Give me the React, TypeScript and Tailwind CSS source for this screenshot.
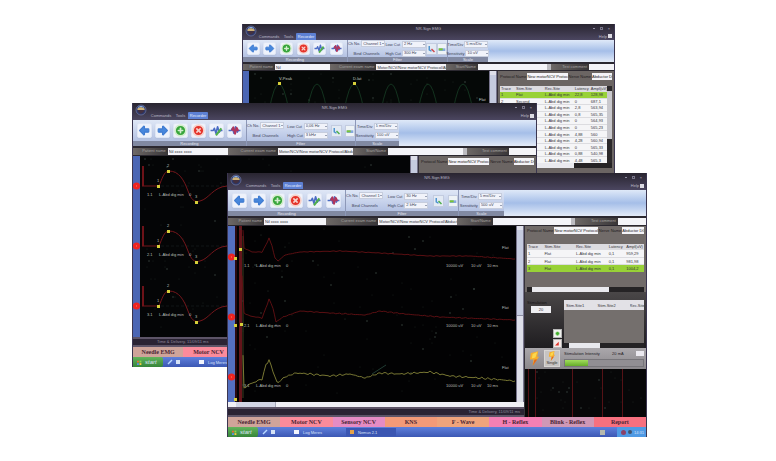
import React, { useId } from 'react';
import { clsx } from 'clsx';
import { ArrowBigLeft, ArrowBigRight, CirclePlus, CircleX } from 'lucide-react';

type Point = [number, number];

interface Row {
  cells: string[];
  active?: boolean;
}

interface DeviceWindowProps {
  variant: 'back' | 'middle' | 'front';
  lowCut: string;
  highCut: string;
  sensitivity: string;
  patient: string;
  status?: string;
  chart: React.ReactNode;
  panel?: React.ReactNode;
}

const footerTabs = [
  { name: 'Needle EMG', color: 'bg-[#cfa49a]' },
  { name: 'Motor NCV', color: 'bg-[#fb8b9b]' },
  { name: 'Sensory NCV', color: 'bg-[#e58cc4]' },
  { name: 'KNS', color: 'bg-[#f39a78]' },
  { name: 'F - Wave', color: 'bg-[#efa47c]' },
  { name: 'H - Reflex', color: 'bg-[#f480b4]' },
  { name: 'Blink - Reflex', color: 'bg-[#cf98b6]' },
  { name: 'Report', color: 'bg-[#f7707f]' },
];

const columns = ['Trace', 'Stim.Site', 'Rec.Site', 'Latency', 'Ampl(uV)'];

const frontRows: Row[] = [
  { cells: ['1', 'Flat', 'L-Abd dig min', '0,1', '959,29'] },
  { cells: ['2', 'Flat', 'L-Abd dig min', '0,1', '981,98'] },
  { cells: ['3', 'Flat', 'L-Abd dig min', '0,1', '1004,2'], active: true },
];

const backRows: Row[] = [
  { cells: ['1', 'Flat', 'L-Abd dig min', '22,8', '128,98'], active: true },
  { cells: ['2', 'Second', 'L-Abd dig min', '0', '687,1'] },
  { cells: ['3', '', 'L-Abd dig min', '2,8', '563,94'] },
  { cells: ['4', '', 'L-Abd dig min', '0,8', '565,35'] },
  { cells: ['5', '', 'L-Abd dig min', '0', '564,93'] },
  { cells: ['6', '', 'L-Abd dig min', '0', '565,23'] },
  { cells: ['7', '', 'L-Abd dig min', '4,88', '560'] },
  { cells: ['8', '', 'L-Abd dig min', '4,28', '560,94'] },
  { cells: ['9', '', 'L-Abd dig min', '0', '565,33'] },
  { cells: ['10', '', 'L-Abd dig min', '0,88', '540,98'] },
  { cells: ['11', '', 'L-Abd dig min', '4,48', '565,3'] },
];

const frontTraces: { y: number; color: string; noise: number; points: Point[] }[] = [
  {
    y: 31,
    color: '#641114',
    noise: 0.4,
    points: [[15, 4], [16, 22], [24, 26], [34, 26], [38, 19], [41, 12], [44, 20], [47, 32], [50, 35], [57, 29], [72, 26], [112, 25], [152, 27], [202, 30], [242, 30], [287, 33]],
  },
  {
    y: 91,
    color: '#641114',
    noise: 0.5,
    points: [[14, 50], [16, 87], [22, 90], [34, 92], [38, 82], [41, 73], [45, 82], [48, 96], [55, 91], [72, 85], [102, 87], [137, 89], [152, 85], [177, 88], [212, 91], [287, 94]],
  },
  {
    y: 151,
    color: '#858338',
    noise: 1.1,
    points: [[15, 129], [16, 162], [22, 158], [34, 153], [38, 139], [41, 134], [45, 145], [49, 157], [57, 151], [68, 147], [82, 148], [102, 150], [122, 148], [137, 152], [152, 147], [172, 148], [202, 146], [222, 150], [252, 152], [287, 155]],
  },
];

// breaks the line into 2px steps and adds a small ripple
function tracePath(points: Point[], noise: number) {
  const out: string[] = [];
  for (let i = 0; i < points.length - 1; i++) {
    const [x0, y0] = points[i];
    const [x1, y1] = points[i + 1];
    const steps = Math.max(1, Math.round((x1 - x0) / 2));
    for (let s = 0; s < steps; s++) {
      const x = x0 + ((x1 - x0) * s) / steps;
      const y = y0 + ((y1 - y0) * s) / steps + Math.sin(x * 1.7) * Math.sin(x * 0.6) * noise;
      out.push(`${x.toFixed(1)},${y.toFixed(1)}`);
    }
  }
  out.push(points[points.length - 1].join(','));
  return out.join(' ');
}

function Specks({ width, height, count }: { width: number; height: number; count: number }) {
  return (
    <g fill="#36403c">
      {Array.from({ length: count }, (_, i) => (
        <circle key={i} cx={12 + ((i * 73 + i * i * 11) % (width - 14))} cy={3 + ((i * 41 + i * i * 7) % (height - 6))} r={i % 4 ? 0.4 : 0.8} />
      ))}
    </g>
  );
}

function Marker({ x, y }: { x: number; y: number }) {
  return <rect x={x - 1} y={y - 1} width="3" height="3" fill="#d6cf3a" />;
}

function Dot({ y }: { y: number }) {
  return (
    <g>
      <circle cx="3.5" cy={y} r="3.6" fill="#ee2420" />
      <rect x="3" y={y - 1} width="1" height="2" fill="#f8513c" />
    </g>
  );
}

function FrontChart() {
  return (
    <svg className="h-full w-full font-['Liberation_Sans'] text-[4px]" role="img" aria-label="Traces">
      <rect width="100%" height="100%" fill="#020203" />
      <rect width="7" height="100%" fill="#5470c0" />
      <rect x="7" width="2" height="100%" fill="#2b0a10" />
      <rect x="11" width="3" height="100%" fill="#64141a" />
      <path d="M15 10V172" stroke="#3c3d22" />
      <Specks width={287} height={174} count={110} />
      {frontTraces.map((t, i) => (
        <g key={t.y}>
          <polyline points={tracePath(t.points, t.noise)} fill="none" stroke={t.color} strokeWidth="0.9" />
          <Dot y={t.y} />
          <g fill="#b9beb9">
            <text x="16" y={t.y + 10}>{i + 1}.1</text>
            <text x="28" y={t.y + 10}>L-Abd dig min</text>
            <text x="58" y={t.y + 10}>0</text>
            <text x="218" y={t.y + 10}>10000 uV</text>
            <text x="243" y={t.y + 10}>10 uV</text>
            <text x="259" y={t.y + 10}>10 ms</text>
            <text x="274" y={t.y - 8}>Flat</text>
          </g>
        </g>
      ))}
      <path d="M144 148l14-9" stroke="#2d5448" strokeWidth="0.7" />
      <Marker x={12} y={23} />
      <Marker x={7} y={32} />
      <Marker x={7} y={99} />
      <Marker x={13} y={98} />
      <Marker x={7} y={173} />
    </svg>
  );
}

function MiddleChart() {
  return (
    <svg className="h-full w-full font-['Liberation_Sans'] text-[4px]" role="img" aria-label="Traces">
      <rect width="100%" height="100%" fill="#040506" />
      <rect width="7" height="100%" fill="#4b66b4" />
      <Specks width={276} height={180} count={130} />
      {[30, 90, 150].map((y, i) => (
        <g key={y}>
          <path d={`M28 ${y}H276`} stroke="#1d2322" strokeDasharray="3 2" strokeWidth="0.6" />
          <path d={`M10 ${y - 20}V${y}`} stroke="#6d1218" strokeWidth="2" />
          <path
            d={`M9 ${y}H26C29 ${y - 7} 31 ${y - 15} 36 ${y - 15}C46 ${y - 15} 51 ${y - 6} 55 ${y + 5}C58 ${y + 13} 61 ${y + 17} 67 ${y + 15}C76 ${y + 13} 80 ${y + 1} 94 ${y}`}
            fill="none"
            stroke="#74161b"
          />
          <Dot y={y} />
          <Marker x={25} y={y} />
          <Marker x={35} y={y - 15} />
          <Marker x={63} y={y + 16} />
          <g fill="#b9beb9">
            <text x="14" y={y + 10}>{i + 1}.1</text>
            <text x="26" y={y + 10}>L-Abd dig min</text>
            <text x="56" y={y + 10}>0</text>
            <text x="24" y={y - 4}>1</text>
            <text x="34" y={y - 19}>2</text>
            <text x="62" y={y + 12}>3</text>
          </g>
        </g>
      ))}
    </svg>
  );
}

function BackChart() {
  return (
    <svg className="h-full w-full font-['Liberation_Sans'] text-[4px]" role="img" aria-label="Traces">
      <rect width="100%" height="100%" fill="#050807" />
      <rect width="6" height="100%" fill="#4b66b4" />
      <Specks width={248} height={100} count={90} />
      {[36, 74, 111, 148, 185, 220].map((x) => (
        <path key={x} d={`M${x - 10} 40Q${x - 5} 13 ${x} 13T${x + 10} 40`} fill="none" stroke="#173d25" strokeWidth="0.8" />
      ))}
      <Marker x={36} y={12} />
      <Marker x={111} y={12} />
      <g fill="#c2c8c2">
        <text x="36" y="9">V-Peak</text>
        <text x="110" y="9">D-lat</text>
        <text x="236" y="30">Flat</text>
      </g>
    </svg>
  );
}

function RibbonSelect({ label, value }: { label: string; value: string }) {
  const id = useId();
  return (
    <div className="flex items-center justify-between gap-px">
      <label htmlFor={id} className="whitespace-nowrap">{label}</label>
      <div className="relative w-6 shrink-0">
        <select id={id} defaultValue={value} className="block h-[7px] w-full appearance-none border border-[#c6cddd] bg-[#f1f3fa] pl-px leading-none">
          <option>{value}</option>
        </select>
        <span className="pointer-events-none absolute right-px top-[3px] h-px w-[2px] bg-[#9aa2b6]" />
      </div>
    </div>
  );
}

function BarField({ label, value = '', dropdown }: { label: string; value?: string; dropdown?: boolean }) {
  const id = useId();
  return (
    <>
      <label htmlFor={id} className="truncate bg-linear-to-r from-[#6d6866] to-[#393638] pr-[2px] text-right text-[#a9a5a4]">
        {label}
      </label>
      {dropdown ? (
        <select id={id} className="h-full w-full min-w-0 appearance-none border-r-4 border-[#bdbcc1] bg-[#f4f4f8]">
          <option>{value}</option>
        </select>
      ) : (
        <input id={id} defaultValue={value} className="h-full w-full min-w-0 bg-[#f4f4f8] pl-px text-[#33343c]" />
      )}
    </>
  );
}

function WaveIcon({ accent }: { accent: 'green' | 'red' }) {
  return (
    <svg viewBox="0 0 24 24" className="h-full w-full" fill="none" strokeLinejoin="round">
      <path d="M1 12h5l2-4 3 9 3-12 3 10 2-3h4" stroke="#4a6cc4" strokeWidth="3" />
      {accent === 'green' ? (
        <path d="M11 21l10-13" stroke="#4fae4c" strokeWidth="4" />
      ) : (
        <path d="M7 12l3-6 3 12 3-11 3 6" stroke="#b0355c" strokeWidth="3.5" />
      )}
    </svg>
  );
}

function Orb() {
  return (
    <svg viewBox="0 0 24 24" className="h-3 w-[14px]">
      <circle cx="12" cy="12" r="10" fill="#2c3768" stroke="#6d749c" strokeWidth="1.5" />
      <path d="M4 10c4-5 11-5 16 0l-3 4H7z" fill="#cdb27a" />
      <path d="M6 12h12v3l-5 4h-3l-4-4z" fill="#423040" />
      <path d="M6 7c4-3 8-3 12 0" stroke="#8db4e8" strokeWidth="2" fill="none" />
    </svg>
  );
}

const tools = [
  { name: 'Previous', icon: <ArrowBigLeft className="h-full w-full" fill="#4787dc" stroke="#3f7bd0" /> },
  { name: 'Next', icon: <ArrowBigRight className="h-full w-full" fill="#4787dc" stroke="#3f7bd0" /> },
  { name: 'Add', icon: <CirclePlus className="h-full w-full" fill="#37a53b" stroke="#d3edcd" strokeWidth={3} /> },
  { name: 'Delete', icon: <CircleX className="h-full w-full" fill="#e5342b" stroke="#f6d0ca" strokeWidth={3} /> },
  { name: 'Edit wave', icon: <WaveIcon accent="green" /> },
  { name: 'Compare wave', icon: <WaveIcon accent="red" /> },
];

function Ribbon({ compact, lowCut, highCut, sensitivity }: { compact: boolean; lowCut: string; highCut: string; sensitivity: string }) {
  const body = clsx('flex items-center bg-linear-to-b from-[#dfe7f6] to-[#b4c2e3]', compact ? 'h-[17px]' : 'h-[21px]');
  const caption = 'h-[5px] bg-[#8189a2] text-center leading-[5px] text-[#e6e8f0]';
  return (
    <div className="flex bg-linear-to-b from-[#dfe9f8] via-[#a5bee8] to-[#e3ebf8] text-[#3d4358]">
      <div className="w-[28%]">
        <div className={clsx(body, 'grid grid-cols-6 justify-items-center px-[2px]')}>
          {tools.map((tool) => (
            <button key={tool.name} aria-label={tool.name} className={clsx('rounded-xs border border-[#dfe6f5] bg-[#eef2fb] shadow-xs', compact ? 'size-[13px]' : 'size-[15px]')}>
              {tool.icon}
            </button>
          ))}
        </div>
        <div className={caption}>Recording</div>
      </div>
      <div className="w-[27%] border-l border-[#8d98b8]">
        <div className={clsx(body, 'justify-between')}>
          <div className="flex flex-col gap-[3px]">
            <RibbonSelect label="Ch No." value="Channel 1" />
            <span className="h-[7px] text-center leading-[7px]">Bind Channels</span>
          </div>
          <div className="flex flex-col gap-[2px]">
            <RibbonSelect label="Low Cut" value={lowCut} />
            <RibbonSelect label="High Cut" value={highCut} />
          </div>
          <button aria-label="Notch filter" className="h-3 w-[11px] border border-[#c3cce0] bg-[#e3eaf4]">
            <svg viewBox="0 0 12 12" className="h-full w-full" fill="none" strokeWidth="2">
              <path d="M3 2v5l3 2" stroke="#4e93ce" />
              <path d="M6 6l4 4" stroke={compact ? '#cf4a4f' : '#4fae4c'} />
            </svg>
          </button>
          <button aria-label="Apply filter" className="h-3 w-[10px] border border-[#c3cce0] bg-[#eef3f6]">
            <svg viewBox="0 0 12 12" className="h-full w-full">
              <path d="M1 5h10v4H1z" fill="#86aadd" />
              <path d="M1 5h6v3H1z" fill="#79c535" />
            </svg>
          </button>
        </div>
        <div className={caption}>Filter</div>
      </div>
      <div className="w-[11%] border-l border-[#8d98b8]">
        <div className={clsx(body, 'flex-col justify-center gap-[2px]')}>
          <RibbonSelect label="Time/Div" value="5 ms/Div" />
          <RibbonSelect label="Sensitivity" value={sensitivity} />
        </div>
        <div className={caption}>Scale</div>
      </div>
    </div>
  );
}

function ResultTable({ rows, className }: { rows: Row[]; className?: string }) {
  return (
    <table className={clsx('w-full table-fixed bg-[#f5f5f7] text-left text-[#34343a]', className)}>
      <thead>
        <tr className="bg-[#dcdbe0]">
          {columns.map((name, i) => (
            <th
              key={name}
              className={clsx('overflow-hidden whitespace-nowrap p-0 pl-px font-normal', i === 0 && 'w-[14%]', i === 1 && 'w-[27%]', i === 2 && 'w-[28%]', i === 3 && 'w-[15%]')}
            >
              {name}
            </th>
          ))}
        </tr>
      </thead>
      <tbody>
        {rows.map((row) => (
          <tr key={row.cells[0]} className={clsx('border-t border-[#dcdce0]', row.active && 'bg-[#98d137]')}>
            {row.cells.map((cell, i) => (
              <td key={i} className="overflow-hidden whitespace-nowrap p-0 pl-px">{cell}</td>
            ))}
          </tr>
        ))}
      </tbody>
    </table>
  );
}

function ProtocolRow() {
  const protocolId = useId();
  const nerveId = useId();
  return (
    <div className="flex h-[7px] items-center gap-px text-[#1f1c1e]">
      <label htmlFor={protocolId} className="shrink-0 whitespace-nowrap">Protocol Name</label>
      <input id={protocolId} defaultValue="New motorNCV Protocol" className="h-full w-0 grow-2 bg-[#f4f4f8]" />
      <label htmlFor={nerveId} className="shrink-0 whitespace-nowrap">Nerve Name</label>
      <input id={nerveId} defaultValue="Abductor DG" className="h-full w-0 grow bg-[#f4f4f8]" />
    </div>
  );
}

function Scrollbar({ thumb }: { thumb: string }) {
  return (
    <div className="flex h-[5px] items-center bg-[#252325] px-[5px]">
      <div className={clsx('h-full bg-[#e9e9ee]', thumb)} />
    </div>
  );
}

function Bolt() {
  return (
    <svg viewBox="0 0 12 16" className="h-full w-full">
      <path d="M2 2l8-2-1 6h2L4 16l1-7H1z" fill="#f7ae2c" />
      <path d="M4 3l5-2-2 6-4 1z" fill="#fbd84d" />
      <path d="M6 9h3l-5 7z" fill="#e0671f" />
    </svg>
  );
}

function FrontPanel() {
  return (
    <div className="flex h-full flex-col bg-[#242224]">
      <div className="bg-[#716b69] px-[2px] pt-px">
        <ProtocolRow />
        <div className="mt-[10px] h-[43px]">
          <ResultTable rows={frontRows} className="h-7" />
        </div>
        <Scrollbar thumb="w-[72%]" />
      </div>
      <div className="flex h-14 gap-[2px] bg-linear-to-b from-[#4a4748] to-[#1f1d20] pr-[2px] pt-2">
        <div className="flex flex-1 flex-col pl-[2px]">
          <label htmlFor="stim-count" className="text-[#141214]">Stimulation</label>
          <input id="stim-count" defaultValue="20" className="ml-1 mt-px h-[7px] w-5 bg-[#eeeef2] text-center text-[#33343c]" />
          <div className="mt-auto flex flex-col items-end gap-px">
            <button aria-label="Add site" className="size-[9px] border border-[#b7b7b7] bg-[#f0f2ee] p-px">
              <svg viewBox="0 0 8 8"><path d="M4 1v6M1 4h6" stroke="#43b02e" strokeWidth="3" /></svg>
            </button>
            <button aria-label="Remove site" className="size-[9px] border border-[#b7b7b7] bg-[#f4e8e6] p-px">
              <svg viewBox="0 0 8 8"><path d="M0 7l6-6v6z" fill="#e03027" /></svg>
            </button>
          </div>
        </div>
        <div className="flex w-20 flex-col bg-[#746f6d]">
          <table className="h-[10px] w-full table-fixed bg-[#e2e1e6] text-left text-[#34343a]">
            <thead>
              <tr>
                <th className="w-[42%] p-0 pl-[2px] font-normal">Stim.Site1</th>
                <th className="w-[40%] p-0 font-normal">Stim.Site2</th>
                <th className="overflow-hidden whitespace-nowrap p-0 font-normal">Rec.Site</th>
              </tr>
            </thead>
          </table>
          <div className="mt-auto">
            <Scrollbar thumb="w-[44%]" />
          </div>
        </div>
      </div>
      <div className="flex h-[21px] items-center gap-1 bg-linear-to-b from-[#aaa7ab] to-[#8b888c] px-[2px]">
        <div className="ml-[2px] h-[15px] w-[11px]"><Bolt /></div>
        <button className="flex h-[17px] w-4 flex-col items-center border border-[#d8d6d4] bg-[#c7c4c2] leading-[4px] text-[#2c2927]">
          <span className="block h-[10px] w-2"><Bolt /></span>
          Single
        </button>
        <div className="flex-1">
          <div className="flex h-[6px] items-center justify-between text-[#232124]">
            <label htmlFor="stim-intensity">Stimulation Intensity</label>
            <span>20 mA</span>
            <input id="stim-intensity" type="checkbox" className="h-[5px] w-2 appearance-none bg-[#eceaf0]" />
          </div>
          <div className="mt-[2px] h-2 border border-[#77757a] bg-[#918e93]">
            <div className="h-full w-[30%] bg-linear-to-b from-[#a2dd5c] to-[#65ac28]" />
          </div>
        </div>
      </div>
      <svg className="min-h-0 w-full flex-1">
        <rect width="100%" height="100%" fill="#070708" />
        <Specks width={120} height={46} count={30} />
        <path d="M3.5 0V50M10.5 0V50M47.5 0V50M77.5 0V50M97.5 0V50" stroke="#551216" />
      </svg>
    </div>
  );
}

function BackPanel() {
  return (
    <div className="h-full bg-[#6b6563] px-[2px] pt-[2px]">
      <ProtocolRow />
      <div className="mt-[6px] flex h-[77px]">
        <ResultTable rows={backRows} className="h-full" />
        <div className="w-[5px] shrink-0 bg-[#2c292b] pt-[5px]">
          <div className="h-12 bg-[#c9c8cd]" />
        </div>
      </div>
      <Scrollbar thumb="w-[68%]" />
    </div>
  );
}

function MiddlePanel() {
  return (
    <div className="h-full bg-[#6b6563] px-[2px] pt-[2px]">
      <ProtocolRow />
    </div>
  );
}

const placement = {
  back: 'left-[242px] top-6 z-10 w-[373px]',
  middle: 'left-[132px] top-[103px] z-20 w-[405px]',
  front: 'left-[227px] top-[173px] z-30 w-[420px]',
};

const asideWidth = {
  back: 'w-[117px]',
  middle: 'w-[118px]',
  front: 'w-[122px]',
};

function DeviceWindow({ variant, lowCut, highCut, sensitivity, patient, status, chart, panel }: DeviceWindowProps) {
  const compact = variant === 'back';
  return (
    <section
      className={clsx(
        "absolute flex h-[264px] flex-col overflow-hidden border-x border-[#3b3650] bg-[#2b2830] font-['Liberation_Sans',sans-serif] text-[4px] leading-[5px]",
        placement[variant],
      )}
    >
      <header className="relative bg-linear-to-b from-[#292530] to-[#4b4660] text-[#b8b5c4]">
        <div className="flex h-2 items-center justify-end gap-[5px] pr-1">
          <h1 className="absolute inset-x-0 text-center">NR-Sign EMG</h1>
          <button aria-label="Minimize" className="relative h-px w-[2px] bg-[#908da0]" />
          <button aria-label="Maximize" className="relative size-[3px] border border-[#777488]" />
          <button aria-label="Close" className="relative">×</button>
        </div>
        <div className="absolute left-px top-px"><Orb /></div>
        <nav className={clsx('flex items-center', compact ? 'h-2 pl-[14px]' : 'h-[9px] pl-4')}>
          <button className="w-6">Commands</button>
          <button className="w-[15px]">Tools</button>
          <button className="h-[7px] w-5 rounded-t-[1px] bg-[#5d80d3] text-[#e7ecfb]">Recorder</button>
          <button className="ml-auto flex items-center gap-px pr-[2px]">
            Help
            <span className="size-1 bg-[#dddce4]" />
          </button>
        </nav>
      </header>
      <Ribbon compact={compact} lowCut={lowCut} highCut={highCut} sensitivity={sensitivity} />
      <div className={clsx('mb-px mt-[2px] grid shrink-0 grid-cols-[36fr_62fr_52fr_78fr_36fr_82fr_43fr_28fr]', compact ? 'h-[6px]' : 'h-[7px]')}>
        <BarField label="Patient name" value={patient} />
        <BarField label="Current exam name" value="Motor/NCV/New motorNCV Protocol/Abductor" />
        <BarField label="Start/Name" dropdown />
        <BarField label="Test comment" />
      </div>
      <div className="flex min-h-0 flex-1">
        <div className="flex min-w-0 flex-1 flex-col">
          <div className="flex min-h-0 flex-1">
            <div className="min-w-0 flex-1">{chart}</div>
            <div className="w-2 border-x border-[#77748c] bg-[#dedfe9]">
              <div className="mt-1 h-[86px] border-b border-[#8e90a5] bg-[#c5cbdf]" />
            </div>
          </div>
          {variant === 'front' && (
            <div className="h-[5px] bg-[#f0f0f5] pl-2">
              <div className="h-full w-10 border-r border-[#a6a8ba] bg-[#d3d6e5]" />
            </div>
          )}
          <div className={clsx('h-[10px] border-y-2 border-[#5d5467] bg-[#2a2333] text-[#8f899b]', variant === 'front' ? 'pr-1 text-right' : 'pl-6')}>
            {status}
          </div>
        </div>
        <aside className={clsx('shrink-0 border-l border-[#35323a]', asideWidth[variant])}>{panel}</aside>
      </div>
      <nav className="grid h-[10px] shrink-0 grid-cols-8 font-['Liberation_Serif',serif] text-[6px] font-bold leading-[10px] text-[#4a2433]">
        {footerTabs.map((tab) => (
          <button key={tab.name} className={clsx('whitespace-nowrap', tab.color)}>{tab.name}</button>
        ))}
      </nav>
      <div className="flex h-[10px] shrink-0 items-center bg-linear-to-b from-[#5f7fdb] to-[#3c58b4] text-[#dbe3fa]">
        <button className="flex h-full w-[30px] items-center gap-[3px] rounded-r-xs bg-linear-to-b from-[#61b45b] to-[#36853a] pl-1 text-[6px] italic">
          <svg viewBox="0 0 8 8" className="size-[5px]">
            <path d="M0 1h3v3H0z" fill="#ee6a35" />
            <path d="M4 1h3v3H4z" fill="#8fd44b" />
            <path d="M0 5h3v3H0z" fill="#5a8ff0" />
            <path d="M4 5h3v3H4z" fill="#f4cf3c" />
          </svg>
          start
        </button>
        <svg viewBox="0 0 14 6" className="ml-1 h-[6px] w-[14px]">
          <path d="M1 5l4-4" stroke="#b8d8ff" strokeWidth="1.5" />
          <path d="M9 1h4v4H9z" fill="#d5e2f6" />
        </svg>
        <button className="ml-4 flex h-2 w-[50px] items-center gap-1 pl-[2px]">
          <span className="h-1 w-[5px] bg-[#f1f4fc]" />
          Log Meres
        </button>
        <button className="ml-1 flex h-2 w-[50px] items-center gap-1 bg-[#3b56b2] pl-1">
          <span className="size-1 bg-[#e3a24a]" />
          Nemus 2.1
        </button>
        <span className="ml-auto mr-3 size-[5px] bg-[#b6b9ae]" />
        <div className="flex h-full w-[29px] items-center gap-[2px] bg-[#4f9ae4] pl-1">
          <span className="size-[5px] rounded-full bg-[#8b4268]" />
          <span className="size-1 rounded-full bg-[#42536f]" />
          <span>14:31</span>
        </div>
      </div>
    </section>
  );
}

export default function App() {
  return (
    <main className="relative min-h-screen overflow-hidden bg-white">
      <DeviceWindow
        variant="back"
        lowCut="2 Hz"
        highCut="300 Hz"
        sensitivity="10 uV"
        patient="Nil"
        chart={<BackChart />}
        panel={<BackPanel />}
      />
      <DeviceWindow
        variant="middle"
        lowCut="0,06 Hz"
        highCut="3 kHz"
        sensitivity="100 uV"
        patient="Nil xxxx xxxx"
        status="Time & Delivery, 11/09/11 ms"
        chart={<MiddleChart />}
        panel={<MiddlePanel />}
      />
      <DeviceWindow
        variant="front"
        lowCut="30 Hz"
        highCut="2 kHz"
        sensitivity="500 uV"
        patient="Nil xxxx xxxx"
        status="Time & Delivery, 11/09/11 ms"
        chart={<FrontChart />}
        panel={<FrontPanel />}
      />
    </main>
  );
}
